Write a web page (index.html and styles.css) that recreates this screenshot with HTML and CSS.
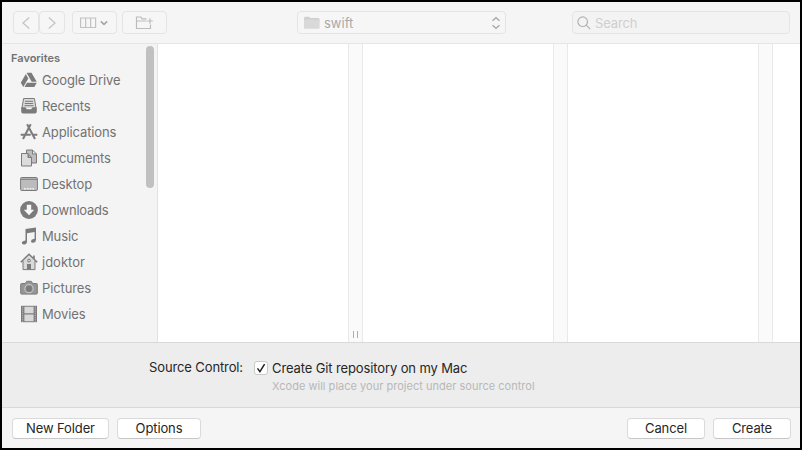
FILE: index.html
```html
<!DOCTYPE html>
<html lang="en">
<head>
<meta charset="utf-8">
<title>Save project</title>
<link rel="stylesheet" href="styles.css">
</head>
<body>
<main class="window">
  <header class="toolbar">
    <div class="nav">
      <button class="tool" aria-label="Back"><svg width="10" height="14" viewBox="0 0 10 14"><path d="M8.2 1.5 2 7l6.2 5.5"/></svg></button>
      <button class="tool" aria-label="Forward"><svg width="10" height="14" viewBox="0 0 10 14"><path d="M1.8 1.5 8 7l-6.2 5.5"/></svg></button>
    </div>
    <button class="tool view" aria-label="Columns">
      <svg width="29" height="12" viewBox="0 0 29 12"><path d="M.6 1h15v9.5H.6zM5.6 1v9.5M10.6 1v9.5"/><path class="dark" d="m20.8 4.3 3.2 3 3.2-3"/></svg>
    </button>
    <button class="tool make" aria-label="New folder">
      <svg width="19" height="14" viewBox="0 0 19 14"><path d="M11.5 2.8H7L5.8 1H1.5v11.5h14V8.5M1.5 5h10M15 2.2v5.6M12.2 5h5.6"/></svg>
    </button>
    <div class="location">
      <svg width="16" height="14" viewBox="0 0 16 14"><path class="tab" d="M0 2Q0 .7 1.2.7H5L6.3 2H14q1.6 0 1.6 1.5V5H0z"/><path class="front" d="M0 3.7h15.6v8q0 1.1-1.1 1.1H1.1Q0 12.8 0 11.7z"/></svg>
      <span class="path">swift</span>
      <svg class="updown" width="10" height="14" viewBox="0 0 10 14"><path d="m1.5 4.7 3.5-3 3.5 3M1.5 9.3l3.5 3 3.5-3"/></svg>
    </div>
    <div class="search">
      <svg width="14" height="14" viewBox="0 0 14 14"><circle cx="5.7" cy="5.7" r="4.8"/><path d="m9.2 9.2 4 4"/></svg>
      <span class="hint">Search</span>
    </div>
  </header>

  <section class="browser">
    <nav class="sidebar">
      <h2>Favorites</h2>
      <ul>
        <li><svg viewBox="0 0 18 18"><path class="solid" d="M6.5 1.8h5l5.2 9h-5zM5.8 3l2.5 4.4-5 8.7-2.5-4.4zM7 11.8h9.8l-2.5 4.3H4.5z"/></svg><span>Google Drive</span></li>
        <li><svg viewBox="0 0 18 18"><path class="pale" d="M3.6 1.3h10.8L16 11H2z"/><path d="M3.6 1.5h10.8L16 11M3.6 1.5 2 11M5 4.3h8M4.8 6.5h8.4M4.5 8.7h9"/><path class="solid" d="M1.2 10.3h4.2l1.4 2h4.4l1.4-2h4.2v4.2q0 2-2 2H3.2q-2 0-2-2z"/></svg><span>Recents</span></li>
        <li><svg viewBox="0 0 18 18"><path class="apps" d="M7.1 1.2 15 16M10.7 1.2 3 16M.7 11.8h10M13.5 11.8h3.8"/></svg><span>Applications</span></li>
        <li><svg viewBox="0 0 18 18"><path class="back" d="M6.5 4V1h6l4 4v9H12L6.5 4M12.5 1v4h4"/><path class="front" d="M1.5 4.5H8l3.5 4V17h-10zM8 4.5v4h3.5"/></svg><span>Documents</span></li>
        <li><svg viewBox="0 0 18 18"><rect class="mid" x=".6" y="2.5" width="16.8" height="13" rx="1"/><path d="M1 4.3h16"/><path class="lightdots" d="M4 13.7h10"/></svg><span>Desktop</span></li>
        <li><svg viewBox="0 0 18 18"><circle class="solid" cx="9" cy="9" r="8.9"/><path class="white" d="M6.8 3.7h4.4v5h3L9 14.2 3.8 8.7h3z"/></svg><span class="downloads">Downloads</span></li>
        <li><svg viewBox="0 0 18 18"><path class="solid" d="M5.5 2 16 .4v12.4q0 2.6-2.6 3-2.5.2-2.4-1.6.1-1.6 2.4-2.1l1.2-.3V5L7 6.2v8.2q0 2.6-2.7 3-2.6.2-2.5-1.6.1-1.6 2.5-2.1l1.2-.3z"/></svg><span>Music</span></li>
        <li><svg viewBox="0 0 18 18"><path class="pale" d="M3 8.5 9 3l6 5.5v8H3z"/><path d="M3 8v8.6h12V8"/><path class="roof" d="m.8 9.3 8.2-8 8.2 8M14 5.8V2.6"/><circle cx="9" cy="7.6" r="1.4"/><path class="solid" d="M7 11h4v5.6H7z"/></svg><span class="home">jdoktor</span></li>
        <li><svg viewBox="0 0 18 18"><path class="camera" d="M1.5 4.5h3.7l1.5-2.2h4.6l1.5 2.2h3.7q.8 0 .8.8v9q0 .8-.8.8h-15q-.8 0-.8-.8v-9q0-.8.8-.8z"/><circle class="lens" cx="9" cy="9.7" r="4.1"/><circle class="solid" cx="9" cy="9.7" r="2.6"/></svg><span>Pictures</span></li>
        <li><svg viewBox="0 0 18 18"><path class="solid" d="M1 .8h16v16.4H1z"/><path class="pale" d="M4.4 1.8h9.2v6.5H4.4zM4.4 9.5h9.2v6.7H4.4z"/><path class="perforations" d="M2.7 1.8v15M15.3 1.8v15"/></svg><span>Movies</span></li>
      </ul>
      <div class="scrollbar"></div>
    </nav>
    <div class="column"></div>
    <div class="gutter"><span class="grip"></span></div>
    <div class="column"></div>
    <div class="gutter"></div>
    <div class="column"></div>
    <div class="gutter"></div>
    <div class="rest"></div>
  </section>

  <section class="options">
    <div class="label">Source Control:</div>
    <svg class="check" width="14" height="14" viewBox="0 0 14 14"><rect x=".5" y=".5" width="13" height="13" rx="2.5"/><path d="m3.5 7.4 2.4 3.2 4.7-7.5"/></svg>
    <div class="choice"><span>Create Git repository on my Mac</span><small>Xcode will place your project under source control</small></div>
  </section>

  <footer class="actions">
    <button class="push new">New Folder</button>
    <button class="push opts">Options</button>
    <button class="push cancel">Cancel</button>
    <button class="push create">Create</button>
  </footer>
</main>
</body>
</html>
```

FILE: styles.css
```css
* { box-sizing: border-box; }
body {
  margin: 0;
  font: 13px/16px Inter, "Liberation Sans", sans-serif;
  letter-spacing: -.12px;
  color: #262626;
}
button { font: inherit; letter-spacing: inherit; color: inherit; padding: 0; margin: 0; }
svg { display: block; flex: none; fill: none; }
span, small { white-space: nowrap; }

.window {
  width: 802px;
  height: 450px;
  border: 2px solid #000;
  background: #f5f5f5;
  display: flex;
  flex-direction: column;
  overflow: hidden;
}

.toolbar {
  height: 42px;
  flex: none;
  display: flex;
  align-items: flex-start;
  padding: 9px 10px 0 11px;
  border-bottom: 1px solid #e5e5e5;
}
.nav { display: flex; }
.tool, .location, .search {
  height: 23px;
  display: flex;
  align-items: center;
  border: 1px solid #e4e4e4;
  border-radius: 4px;
  background: #f6f6f6;
}
.tool { width: 26px; justify-content: center; }
.tool svg { stroke: #c2c2c2; stroke-width: 1.2; }
.tool .dark { stroke: #a6a6a6; stroke-width: 1.6; }
.view { width: 45px; margin-left: 7px; }
.make { width: 45px; margin-left: 5px; }
.make svg { stroke: #bcbcbc; }
.location { width: 209px; margin-left: 130px; padding: 0 4px 0 6px; color: #a9a9a9; }
.location .tab { fill: #d0d0d0; }
.location .front { fill: #d9d9d9; }
.path { margin-left: 4px; letter-spacing: 0; }
.updown { margin-left: auto; stroke: #aaa; stroke-width: 1.4; }
.search { width: 218px; margin-left: auto; padding-left: 4px; background: #f3f3f3; color: #cfcfcf; }
.search svg { stroke: #b3b3b3; stroke-width: 1.2; }
.hint { margin-left: 4px; }

.browser { height: 298px; flex: none; display: flex; background: #fff; }
.sidebar {
  width: 156px;
  flex: none;
  position: relative;
  background: #f4f4f4;
  border-right: 1px solid #e2e2e2;
  color: #727272;
}
.sidebar h2 {
  margin: 0;
  padding: 7px 0 0 9px;
  font-size: 11px;
  line-height: 15px;
  font-weight: 600;
  letter-spacing: 0;
}
.sidebar ul { list-style: none; margin: 1px 0 0; padding: 0; }
.sidebar li { height: 26px; display: flex; align-items: center; padding-left: 18px; gap: 4px; }
.sidebar li svg { width: 18px; height: 18px; stroke: #7b7b7b; stroke-width: 1; }
.downloads { letter-spacing: -.22px; }
.home { letter-spacing: 0; }
.sidebar .solid { fill: #7b7b7b; stroke: none; }
.sidebar .pale { fill: #d9d9d9; stroke: none; }
.sidebar .back { fill: #bdbdbd; }
.sidebar .front { fill: #dcdcdc; }
.sidebar .mid { fill: #bcbcbc; }
.sidebar .apps { stroke-width: 2; }
.sidebar .roof { stroke-width: 1.6; }
.sidebar .white { fill: #f7f7f7; stroke: none; }
.sidebar .lightdots { stroke: #f2f2f2; stroke-width: 1.4; stroke-dasharray: 1.8 1; }
.sidebar .camera { fill: #969696; }
.sidebar .lens { fill: #888; stroke: #cecece; }
.sidebar .perforations { stroke: #bcbcbc; stroke-width: 1.2; stroke-dasharray: 1 1; }
.scrollbar {
  position: absolute;
  top: 2px;
  right: 3px;
  width: 8px;
  height: 142px;
  border-radius: 4px;
  background: #c0c0c0;
}
.column { width: 190px; flex: none; }
.gutter {
  width: 15px;
  flex: none;
  background: #fafafa;
  border: solid #e9e9e9;
  border-width: 0 1px;
  display: flex;
  justify-content: center;
  align-items: flex-end;
}
.grip { width: 5px; height: 7px; margin-bottom: 4px; border: solid #acacac; border-width: 0 1px; }
.rest { flex: 1; }

.options {
  height: 66px;
  flex: none;
  display: flex;
  align-items: flex-start;
  background: #ededed;
  border: solid #d9d9d9;
  border-width: 1px 0;
}
.label { width: 241px; text-align: right; padding-top: 16px; }
.check { margin: 18px 0 0 11px; }
.check rect { fill: #fff; stroke: #c9c9c9; }
.check path { stroke: #222; stroke-width: 1.5; }
.choice { margin: 17px 0 0 4px; display: flex; flex-direction: column; }
.choice small { font-size: 11px; line-height: 14px; margin-top: 3px; color: #b8b8b8; letter-spacing: .02px; }

.actions { flex: 1; display: flex; align-items: flex-start; padding: 10px 9px 0 10px; }
.push {
  height: 21px;
  border: 1px solid #dadada;
  border-bottom-color: #c6c6c6;
  border-radius: 4px;
  background: #fff;
  line-height: 18px;
  padding-bottom: 1px;
  text-align: center;
}
.new { width: 97px; }
.opts { width: 84px; margin-left: 8px; }
.cancel { width: 78px; margin-left: auto; }
.create { width: 78px; margin-left: 8px; }
```
